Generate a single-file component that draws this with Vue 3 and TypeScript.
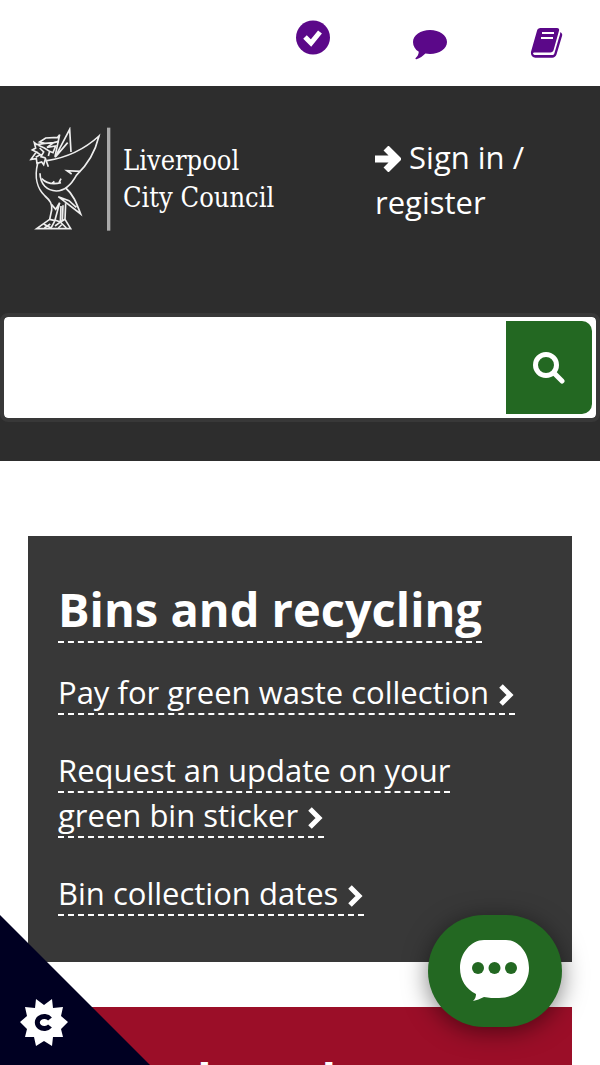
<script setup lang="ts">
import { ref } from 'vue'

interface CardLink {
  lead: string
  last: string
}

const query = ref('')
const links: CardLink[] = [
  { lead: 'Pay for green waste', last: 'collection' },
  { lead: 'Request an update on your green bin', last: 'sticker' },
  { lead: 'Bin collection', last: 'dates' },
]
</script>

<template>
  <div class="page">
    <nav class="quick" aria-label="Quick links">
      <a href="#services" aria-label="Services">
        <svg class="quick-icon" viewBox="0 0 34 40" aria-hidden="true">
          <circle cx="17" cy="17.500" r="17" />
          <path class="cut" d="M9 17l6 6 9-11" />
        </svg>
      </a>
      <a href="#contact" aria-label="Contact">
        <svg class="quick-icon" viewBox="0 0 34 40" aria-hidden="true">
          <path d="M17 10c9.400 0 17 5.400 17 12s-7.600 12-17 12c-1.600 0-3.100-.1-4.600-.4C9.800 36.200 7 38.500 3.400 39.200c-.9.200-1.300-.5-.7-1.100 1.600-1.600 2.900-3.300 3.100-6.300C2.200 29.600 0 26 0 22 0 15.400 7.600 10 17 10z" />
        </svg>
      </a>
      <a href="#news" aria-label="News">
        <svg class="quick-icon" viewBox="0 0 34 40" aria-hidden="true">
          <path d="M10.500 8H27c1.700 0 2.500 1.200 2 2.800L23.600 30c-.4 1.500-1.600 2.400-3.200 2.400H4.600c-1.200 0-1.800.6-1.500 1.300.3.900 1.200 1.300 2.500 1.300H22c1.200 0 2-.5 2.300-1.600L30 14.200c.2-.7.200-1.300.1-1.900 1.800.7 2.500 1.900 2 3.500L26.500 34.500c-.6 2-2.300 3.200-4.300 3.200H5.400C2.700 37.700.9 35.600.9 33c0-1 .3-2 .6-3L7 10.700C7.500 9 8.700 8 10.500 8z" />
          <path class="rule" d="M12 13h12M11 18h12" />
        </svg>
      </a>
    </nav>

    <header class="masthead">
      <div class="brand-row">
        <a class="brand" href="#home">
          <svg class="bird" viewBox="9 15 252 312" aria-hidden="true">
            <path d="M66 116C118 108 176 84 222 42C212 84 188 128 154 160C140 186 122 206 94 207C66 206 46 188 45 154" />
            <path d="M166 148L126 146L140 156M50 170C64 184 86 188 108 182M82 184l6-6M102 182l6-12" />
            <path d="M90 106L134 22L138 90M92 104L128 62M62 112l8 22" />
            <path d="M90 104L104 38L98 46L62 48L44 60L60 64L36 68L28 62L32 78L22 84L34 90L18 112L34 110L36 124L50 120L56 128L62 108" />
            <path d="M60 64L86 62L66 76L92 72L84 92L74 88L70 102M44 78L56 90L48 104L62 108M34 90L46 98L32 106M86 62L102 58M40 70L58 78L74 88" />
            <path d="M38 124C28 164 36 200 60 222C76 236 82 246 80 264L74 292L35 320H137L120 292L122 244" />
            <path d="M122 198C144 216 154 242 167 276L100 224L132 236L154 256" />
            <path d="M80 248L92 262L104 242L90 294L106 300L108 252M114 250L112 298" />
            <path d="M74 292L90 296L78 318L56 306M106 300L120 292M90 312L106 300L124 318M58 318L76 306M100 318l12-12" />
            <path class="divider" d="M251 17v309" />
          </svg>
          <span class="brand-name">Liverpool<br />City Council</span>
        </a>
        <div class="account">
          <a href="#sign-in">
            <svg class="arrow" viewBox="0 0 26 26" aria-hidden="true">
              <path d="M0 13h20M11 2l11 11-11 11" />
            </svg>
            Sign in / register
          </a>
        </div>
      </div>

      <form class="search" role="search" @submit.prevent>
        <input v-model="query" type="search" aria-label="Search" />
        <button type="submit" aria-label="Submit search">
          <svg viewBox="0 0 32 32" aria-hidden="true">
            <circle cx="13" cy="13" r="10.500" />
            <path d="M21 21l8 8" />
          </svg>
        </button>
      </form>
    </header>

    <main class="cards">
      <section class="card">
        <h2><a href="#bins">Bins and recycling</a></h2>
        <ul>
          <li v-for="link in links" :key="link.last">
            <a href="#bins">{{ link.lead }} <span class="tail">{{ link.last }} <svg class="chevron" viewBox="0 0 18 22" aria-hidden="true"><path d="M4 2l9 9-9 9" /></svg></span></a>
          </li>
        </ul>
      </section>
      <section class="card red">
        <h2><a href="#schools">Schools and</a></h2>
      </section>
    </main>

    <button class="cookie" type="button" aria-label="Cookie preferences">
      <svg viewBox="0 0 150 150" aria-hidden="true">
        <path class="corner" d="M0 0l150 150H0z" />
        <polygon class="badge" points="44,90 52,84 53,93 63,92 61,101 68,107 61,114 63,122 53,122 52,131 44,126 36,131 34,122 25,122 27,114 20,107 27,101 25,92 35,93 36,84" />
        <path class="letter" d="M50 104a7 6 0 1 0 0 7" />
      </svg>
    </button>

    <button class="chat" type="button" aria-label="Open chat">
      <svg viewBox="0 0 70 62" aria-hidden="true">
        <path d="M24 0h22c13 0 23 13 23 28 0 17-13 30-30 30-6 0-10 0-15-1-4 2-7 3-11 4 2-2 3-4 3-7C6 49 0 40 0 28 0 13 11 0 24 0z" />
        <g class="dots"><circle cx="18" cy="28" r="6" /><circle cx="34.500" cy="28" r="6" /><circle cx="51" cy="28" r="6" /></g>
      </svg>
    </button>
  </div>
</template>

<style>
body {
  margin: 0;
}
</style>

<style scoped>
.page {
  height: 100vh;
  overflow: hidden;
  background: #fff;
  color: #fff;
  font-family: "Open Sans", "Noto Sans", sans-serif;
  font-size: 31px;
  line-height: 45px;
}
a {
  color: inherit;
  text-decoration: none;
}
button {
  border: 0;
  padding: 0;
  cursor: pointer;
}
svg {
  display: block;
}
.quick {
  display: flex;
  justify-content: flex-end;
  gap: 83px;
  padding: 20px 36px 26px;
}
.quick-icon {
  width: 34px;
  height: 40px;
  fill: #5b0889;
}
.quick .cut {
  fill: none;
  stroke: #fff;
  stroke-width: 5;
}
.quick .rule {
  fill: none;
  stroke: #fff;
  stroke-width: 2;
}
.masthead {
  background: #2d2d2d;
  padding-bottom: 39px;
}
.brand-row {
  display: grid;
  grid-template-columns: 5fr 3fr;
  align-items: start;
  height: 227px;
}
.brand {
  display: flex;
  gap: 11px;
  padding: 41px 0 0 28px;
}
.bird {
  width: 84px;
  height: 104px;
  fill: none;
  stroke: #eee;
  stroke-width: 5;
}
.bird .divider {
  stroke: #aaa;
  stroke-width: 10;
}
.brand-name {
  padding-top: 15px;
  font-family: "DejaVu Serif Condensed", "DejaVu Serif", serif;
  font-size: 27px;
  line-height: 37px;
  white-space: nowrap;
}
.account {
  padding: 49px 28px 0 0;
}
.arrow {
  display: inline-block;
  width: 26px;
  height: 26px;
  vertical-align: -3px;
  fill: none;
  stroke: #fff;
  stroke-width: 7;
}
.search {
  display: flex;
  height: 93px;
  padding: 4px;
  border: 4px solid #383838;
  border-radius: 8px;
  background: #fff;
  background-clip: padding-box;
}
.search input {
  flex: 1;
  min-width: 0;
  border: 0;
  padding: 0 20px;
  outline: 0;
  background: transparent;
  font: inherit;
}
.search button {
  display: grid;
  place-items: center;
  width: 86px;
  border-radius: 0 10px 10px 0;
  background: #236822;
}
.search svg {
  width: 32px;
  height: 32px;
  fill: none;
  stroke: #fff;
  stroke-width: 5;
  stroke-linecap: round;
}
.cards {
  display: grid;
  gap: 45px;
  padding: 75px 28px 0;
}
.card {
  padding: 43px 30px 46px;
  background: #383838;
}
.card.red {
  background: #9b0e28;
}
h2 {
  margin: 0 0 31px;
  font-size: 47px;
  font-weight: 700;
  line-height: 60px;
}
.card a {
  border-bottom: 2px dashed #fff;
}
ul {
  display: grid;
  gap: 33px;
  margin: 0;
  padding: 0 10px 0 0;
  list-style: none;
}
.tail {
  white-space: nowrap;
}
.chevron {
  display: inline-block;
  width: 18px;
  height: 22px;
  vertical-align: -2px;
  fill: none;
  stroke: #fff;
  stroke-width: 5;
}
.cookie {
  position: fixed;
  bottom: 0;
  left: 0;
  width: 150px;
  height: 150px;
  background: transparent;
}
.corner {
  fill: #000022;
}
.badge {
  fill: #fff;
}
.letter {
  fill: none;
  stroke: #000022;
  stroke-width: 5;
}
.chat {
  position: fixed;
  right: 38px;
  bottom: 38px;
  display: grid;
  place-items: center;
  width: 134px;
  height: 112px;
  border-radius: 56px;
  background: #236822;
  box-shadow: 0 4px 24px rgba(0, 0, 0, 0.5);
}
.chat svg {
  width: 70px;
  height: 62px;
  fill: #fff;
}
.chat .dots {
  fill: #236822;
}
</style>
